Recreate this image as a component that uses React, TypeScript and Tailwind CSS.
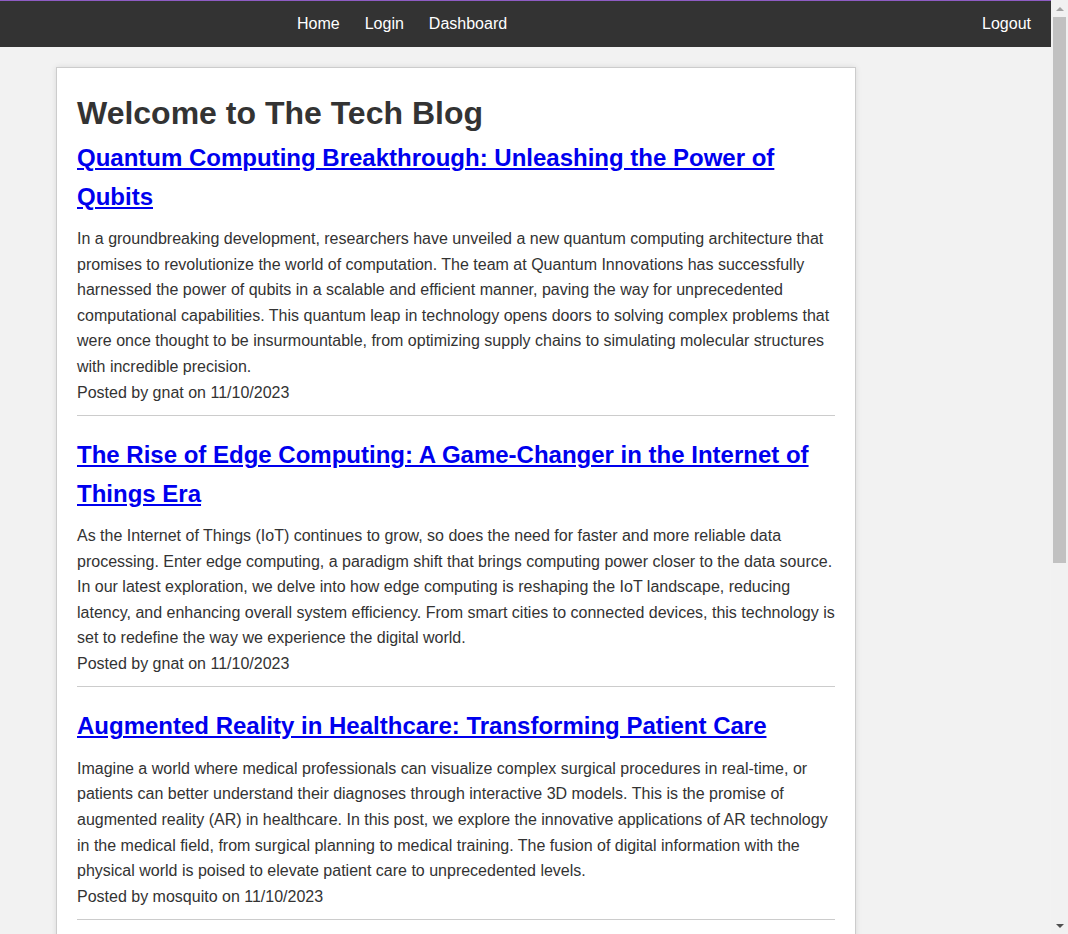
const posts = [
  {
    title: "Quantum Computing Breakthrough: Unleashing the Power of Qubits",
    body: "In a groundbreaking development, researchers have unveiled a new quantum computing architecture that promises to revolutionize the world of computation. The team at Quantum Innovations has successfully harnessed the power of qubits in a scalable and efficient manner, paving the way for unprecedented computational capabilities. This quantum leap in technology opens doors to solving complex problems that were once thought to be insurmountable, from optimizing supply chains to simulating molecular structures with incredible precision.",
    author: "gnat",
    date: "11/10/2023",
  },
  {
    title: "The Rise of Edge Computing: A Game-Changer in the Internet of Things Era",
    body: "As the Internet of Things (IoT) continues to grow, so does the need for faster and more reliable data processing. Enter edge computing, a paradigm shift that brings computing power closer to the data source. In our latest exploration, we delve into how edge computing is reshaping the IoT landscape, reducing latency, and enhancing overall system efficiency. From smart cities to connected devices, this technology is set to redefine the way we experience the digital world.",
    author: "gnat",
    date: "11/10/2023",
  },
  {
    title: "Augmented Reality in Healthcare: Transforming Patient Care",
    body: "Imagine a world where medical professionals can visualize complex surgical procedures in real-time, or patients can better understand their diagnoses through interactive 3D models. This is the promise of augmented reality (AR) in healthcare. In this post, we explore the innovative applications of AR technology in the medical field, from surgical planning to medical training. The fusion of digital information with the physical world is poised to elevate patient care to unprecedented levels.",
    author: "mosquito",
    date: "11/10/2023",
  },
];

// browser scrollbar as it shows in the screenshot
function Scrollbar() {
  return (
    <div className="fixed right-0 top-0 flex h-screen w-[17px] flex-col bg-[#f1f1f1]">
      <div className="flex h-[17px] items-center justify-center">
        <div className="h-0 w-0 border-x-[4px] border-b-[4px] border-x-transparent border-b-[#a3a3a3]" />
      </div>
      <div className="flex-1 px-[2px]">
        <div className="h-[546px] bg-[#c1c1c1]" />
      </div>
      <div className="flex h-[17px] items-center justify-center">
        <div className="h-0 w-0 border-x-[4px] border-t-[4px] border-x-transparent border-t-[#505050]" />
      </div>
    </div>
  );
}

export default function App() {
  return (
    <div className="min-h-[1540px] bg-[#f2f2f2] pr-[17px] font-['Liberation_Sans',Arial,sans-serif] leading-[1.6] text-[#333]">
      <nav className="flex h-[47px] items-center justify-between border-t border-[#8e5cc4] bg-[#333] pl-[297px] pr-[20px] text-base text-white">
        <div className="flex gap-[25px]">
          <a href="#">Home</a>
          <a href="#">Login</a>
          <a href="#">Dashboard</a>
        </div>
        <a href="#">Logout</a>
      </nav>

      <main className="ml-[56px] mt-[20px] w-[800px] border border-[#ccc] bg-white p-5 shadow-[0_0_6px_rgba(0,0,0,0.1)]">
        <h1 className="text-[32px] font-bold">Welcome to The Tech Blog</h1>
        {posts.map((post, i) => (
          <article key={i} className="mb-5 border-b border-[#ccc] pb-2.5">
            <h2 className="text-[24px] font-bold">
              <a href="#" className="text-[#0000ee] underline">{post.title}</a>
            </h2>
            <p className="mt-2.5">{post.body}</p>
            <p>Posted by {post.author} on {post.date}</p>
          </article>
        ))}
      </main>

      <Scrollbar />
    </div>
  );
}
